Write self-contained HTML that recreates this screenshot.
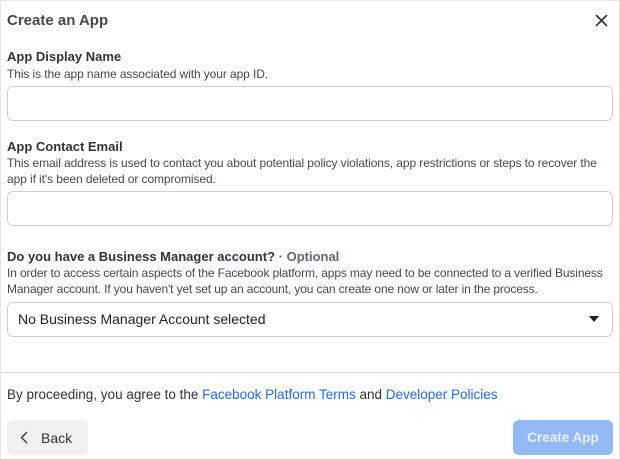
<!DOCTYPE html>
<html><head><style>
*{margin:0;padding:0;box-sizing:border-box}
body{width:620px;height:459px;overflow:hidden;background:#fff;font-family:"Liberation Sans",Arial,sans-serif;color:#1c1e21;position:relative}
.frame{position:absolute;left:0;top:0;width:620px;height:459px;border:1px solid #e4e6eb;border-bottom:none}
.a{position:absolute;white-space:nowrap}
.t{left:7px;top:12px;font-size:15px;font-weight:bold;color:#444950}
.h{left:7px;font-size:13px;font-weight:bold;color:#303338}
.d{left:7px;font-size:12px;color:#444950;line-height:16px;letter-spacing:-0.09px}
.in{position:absolute;left:7px;width:606px;height:35px;border:1px solid #ccd0d5;border-radius:6px;background:#fff}
.sep{position:absolute;left:0;top:372px;width:620px;height:1px;background:#dadde1}
a{color:#216fdb;text-decoration:none}
</style></head><body>
<div class="frame"></div>
<div class="a t">Create an App</div>
<svg class="a" style="left:595px;top:14px" width="13" height="13" viewBox="0 0 13 13"><path d="M1 1L12 12M12 1L1 12" stroke="#333" stroke-width="1.6"/></svg>
<div class="a h" style="top:49px">App Display Name</div>
<div class="a d" style="top:66px">This is the app name associated with your app ID.</div>
<div class="in" style="top:86px"></div>
<div class="a h" style="top:139px">App Contact Email</div>
<div class="a d" style="top:155px">This email address is used to contact you about potential policy violations, app restrictions or steps to recover the<br>app if it's been deleted or compromised.</div>
<div class="in" style="top:191px"></div>
<div class="a h" style="top:249px">Do you have a Business Manager account? <span style="color:#606770;font-weight:bold">· Optional</span></div>
<div class="a d" style="top:265px;letter-spacing:-0.13px">In order to access certain aspects of the Facebook platform, apps may need to be connected to a verified Business<br>Manager account. If you haven't yet set up an account, you can create one now or later in the process.</div>
<div class="in" style="top:302px"></div>
<div class="a" style="left:18px;top:311px;font-size:14px;color:#1c1e21">No Business Manager Account selected</div>
<svg class="a" style="left:589px;top:316px" width="10" height="6" viewBox="0 0 10 6"><path d="M0 0H10L5 6Z" fill="#1c1e21"/></svg>
<div class="sep"></div>
<div class="a" style="left:7px;top:387px;font-size:13.5px;color:#303338">By proceeding, you agree to the <a>Facebook Platform Terms</a> and <a>Developer Policies</a></div>
<div class="a" style="left:7px;top:420px;width:81px;height:35px;background:#f0f0f0;border-radius:6px"></div>
<svg class="a" style="left:20px;top:431px" width="8" height="13" viewBox="0 0 8 13"><path d="M7 1L1.5 6.5L7 12" stroke="#333" stroke-width="1.3" fill="none"/></svg>
<div class="a" style="left:41px;top:430px;font-size:14px;color:#303338">Back</div>
<div class="a" style="left:513px;top:420px;width:100px;height:35px;background:#93b9f5;border-radius:6px;color:#e9f0fd;font-size:13.5px;font-weight:bold;text-align:center;line-height:35px">Create App</div>
</body></html>
